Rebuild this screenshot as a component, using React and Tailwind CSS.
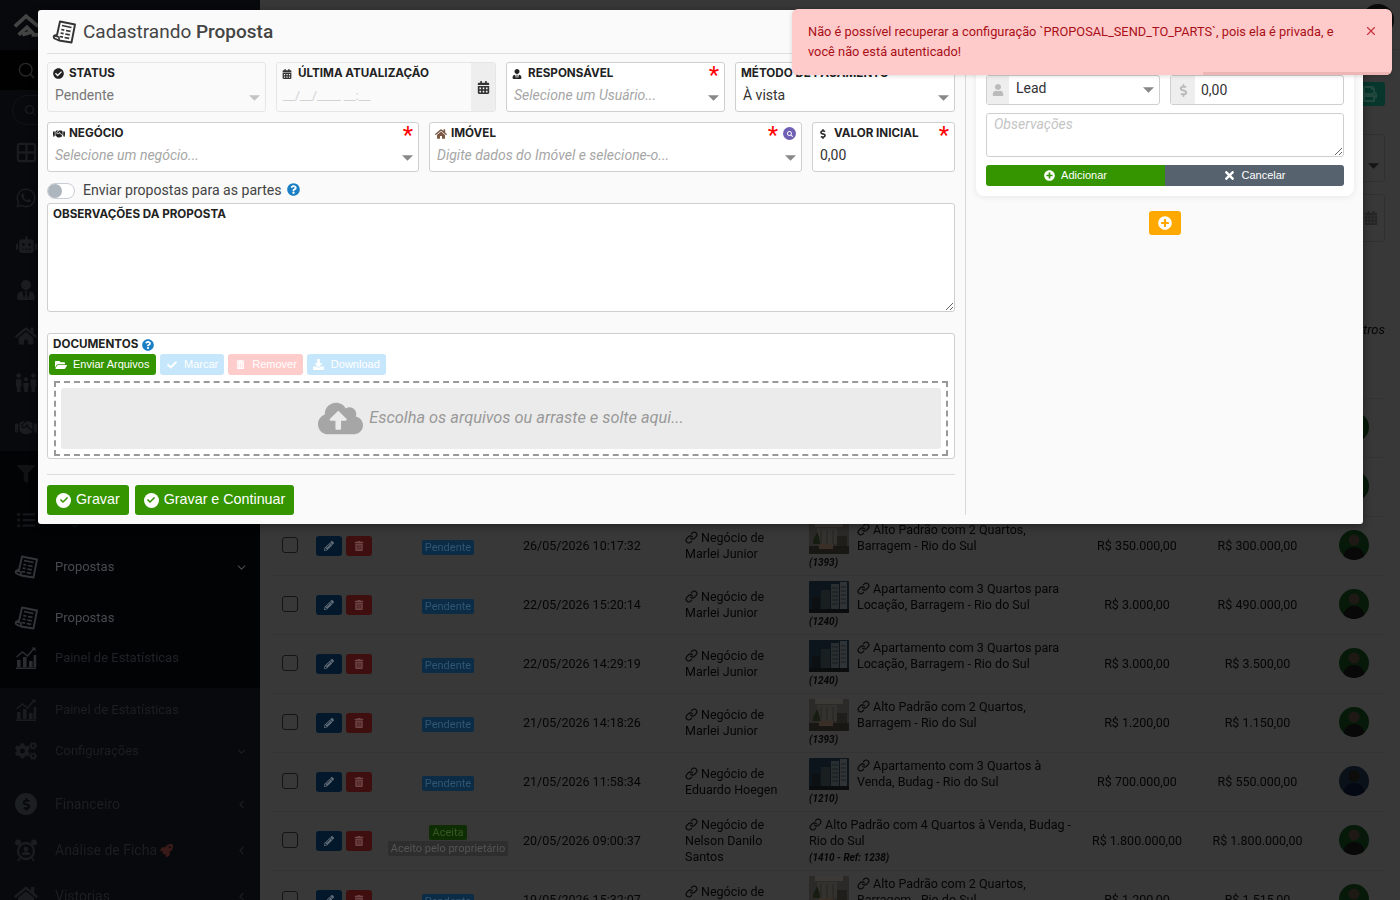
import {
  FaCalendarAlt, FaCheck, FaCheckCircle, FaCloudUploadAlt, FaCogs, FaDollarSign, FaDownload, FaFilter,
  FaFolderOpen, FaHandshake, FaHome, FaListUl, FaPencilAlt, FaPlusCircle, FaPrint, FaQuestionCircle,
  FaRobot, FaRocket, FaSearch, FaTimes, FaTrashAlt, FaUser, FaUserTie, FaWhatsapp,
} from "react-icons/fa";
import { ChevronDown, ChevronLeft, Grid2x2, Link as LinkIcon, Search, X } from "lucide-react";

const rows = [
  { date: "26/05/2026 10:17:32", name: "Marlei Junior", title: "Alto Padrão com 2 Quartos, Barragem - Rio do Sul", code: "(1393)", thumb: "room", v1: "R$ 350.000,00", v2: "R$ 300.000,00" },
  { date: "22/05/2026 15:20:14", name: "Marlei Junior", title: "Apartamento com 3 Quartos para Locação, Barragem - Rio do Sul", code: "(1240)", thumb: "tower", v1: "R$ 3.000,00", v2: "R$ 490.000,00" },
  { date: "22/05/2026 14:29:19", name: "Marlei Junior", title: "Apartamento com 3 Quartos para Locação, Barragem - Rio do Sul", code: "(1240)", thumb: "tower", v1: "R$ 3.000,00", v2: "R$ 3.500,00" },
  { date: "21/05/2026 14:18:26", name: "Marlei Junior", title: "Alto Padrão com 2 Quartos, Barragem - Rio do Sul", code: "(1393)", thumb: "room", v1: "R$ 1.200,00", v2: "R$ 1.150,00" },
  { date: "21/05/2026 11:58:34", name: "Eduardo Hoegen", title: "Apartamento com 3 Quartos à Venda, Budag - Rio do Sul", code: "(1210)", thumb: "tower", v1: "R$ 700.000,00", v2: "R$ 550.000,00", blue: true },
  { date: "20/05/2026 09:00:37", name: "Nelson Danilo Santos", title: "Alto Padrão com 4 Quartos à Venda, Budag - Rio do Sul", code: "(1410 - Ref: 1238)", v1: "R$ 1.800.000,00", v2: "R$ 1.800.000,00", accepted: true },
  { date: "19/05/2026 15:32:07", name: "Marlei Junior", title: "Alto Padrão com 2 Quartos, Barragem - Rio do Sul", code: "(1393)", thumb: "room", v1: "R$ 1.200,00", v2: "R$ 1.515,00" },
];

function PropostaIcon({ className }) {
  return (
    <svg viewBox="0 0 24 24" className={className} fill="none" stroke="currentColor">
      <path d="M8 1.5 L23 4.5 L19.5 22.5 L7 20.5 L2.5 18.5 Q1 17 2.5 15.5 L5 15 Z" strokeWidth="1.9" strokeLinejoin="round" />
      <path d="M10 5.5l9.5 2M9.3 9.5l3 .6M14 10.5l4.5 .9M8.6 13l3 .6M13.3 14l4.5 .9M8 16.5l3 .6M12.6 17.5l4.5 .9" strokeWidth="1.7" />
      <path d="M3 16 L7 17 L7 20.5" strokeWidth="1.6" />
    </svg>
  );
}

function ChartIcon() {
  return (
    <svg viewBox="0 0 24 24" className="h-[24px] w-[24px]" fill="currentColor">
      <path d="M2 23h20v-1.6H2z" />
      <path d="M3 14h3.6v7H3zM9 11h3.6v10H9zM15 15h3.6v6H15zM19.6 9h2.6v12h-2.6z" />
      <path d="M2.5 11l6-5 5 4 6-7" fill="none" stroke="currentColor" strokeWidth="1.6" />
      <path d="M17.5 1.5h4v4z" />
    </svg>
  );
}

function FamilyIcon() {
  return (
    <svg viewBox="0 0 26 24" className="h-[22px] w-[24px]" fill="currentColor">
      <circle cx="5" cy="5" r="2.6" />
      <circle cx="21" cy="5" r="2.6" />
      <circle cx="13" cy="9" r="2.2" />
      <path d="M2 9h6v8H7v6H3v-6H2zM18 9h6v8h-1v6h-4v-6h-1zM10 13h6v5h-1v5h-4v-5h-1z" />
    </svg>
  );
}

function AlarmIcon() {
  return (
    <svg viewBox="0 0 24 24" className="h-[26px] w-[24px]" fill="none" stroke="currentColor">
      <circle cx="12" cy="13" r="8" strokeWidth="2.4" />
      <circle cx="12" cy="11" r="2.4" fill="currentColor" stroke="none" />
      <path d="M7.5 17c.6-2.6 2.4-3.4 4.5-3.4s3.9.8 4.5 3.4z" fill="currentColor" stroke="none" />
      <circle cx="4" cy="4.5" r="3" fill="currentColor" stroke="none" />
      <circle cx="20" cy="4.5" r="3" fill="currentColor" stroke="none" />
      <path d="M6 20l-2 3M18 20l2 3" strokeWidth="2" />
    </svg>
  );
}

function Caret({ className = "mt-[4px] text-[#888]" }) {
  return (
    <svg viewBox="0 0 12 6" className={`h-[6px] w-[11px] shrink-0 ${className}`}>
      <polygon points="0,0 12,0 6,6" fill="currentColor" />
    </svg>
  );
}

function Thumb({ type }) {
  if (type === "tower") {
    return (
      <svg viewBox="0 0 40 32" className="h-[32px] w-[40px] shrink-0 rounded-[1px]">
        <rect width="40" height="32" fill="#0d151c" />
        <rect x="22" y="3" width="8" height="29" fill="#292e31" />
        <rect x="31" y="1" width="7" height="31" fill="#303437" />
        <rect x="12" y="9" width="9" height="23" fill="#191e21" />
        <rect x="3" y="16" width="8" height="16" fill="#0d1012" />
        <path d="M23 7h6M23 11h6M23 15h6M23 19h6M23 23h6M32 6h5M32 10h5M32 14h5M32 18h5M32 22h5" stroke="#191d20" />
        <rect y="28" width="40" height="4" fill="#0a0c0d" />
      </svg>
    );
  }
  return (
    <svg viewBox="0 0 40 32" className="h-[32px] w-[40px] shrink-0 rounded-[1px]">
      <rect width="40" height="32" fill="#2b2a28" />
      <rect x="6" width="28" height="5" fill="#3c3a37" />
      <rect x="8" y="6" width="20" height="16" fill="#33322f" />
      <path d="M12 22V8M18 22V8M24 22V8" stroke="#262523" />
      <path d="M4 22c0-6 3-8 4-12 2 4 3 8 3 12z" fill="#161d10" />
      <rect x="28" y="14" width="10" height="10" fill="#1f1e1b" />
      <rect y="24" width="40" height="8" fill="#191714" />
      <rect x="10" y="22" width="14" height="5" fill="#3a2f27" />
    </svg>
  );
}

function Avatar({ blue }) {
  return (
    <svg viewBox="0 0 30 30" className="h-[30px] w-[30px] rounded-full">
      <rect width="30" height="30" fill={blue ? "#0b1118" : "#071a0a"} />
      <circle cx="15" cy="10" r="5.5" fill={blue ? "#0e0c0a" : "#1f1915"} />
      <path d="M4 30c0-9 5-13 11-13s11 4 11 13z" fill={blue ? "#040812" : "#080808"} />
    </svg>
  );
}

const rowGrid = "grid h-[59px] grid-cols-[44px_70px_124px_175px_124px_268px_120px_121px_67px] items-center border-t border-[#333]";

// these two sit behind the modal, only the avatar sticks out on the right
function HiddenRow() {
  return (
    <div className={rowGrid}>
      <div className="col-start-9 pb-[3px] pl-[21px]">
        <Avatar />
      </div>
    </div>
  );
}

function Row({ row }) {
  return (
    <div className={`${rowGrid} text-[12.5px] leading-4 text-[#050505]`}>
      <div className="pb-[2px] pl-[10px]">
        <div className="h-4 w-4 rounded-[3px] border border-[#141414]" />
      </div>
      <div className="flex gap-1">
        <div className="flex h-5 w-[26px] items-center justify-center rounded-[3px] bg-[#04182c] text-[#5f6c78]">
          <FaPencilAlt size={10} />
        </div>
        <div className="flex h-5 w-[26px] items-center justify-center rounded-[3px] bg-[#3f0e0e] text-[#6e4444]">
          <FaTrashAlt size={10} />
        </div>
      </div>
      <div className="flex flex-col items-center pt-[2px] text-[11px] leading-[15px]">
        {row.accepted ? (
          <>
            <span className="mt-[-4px] rounded-[2px] bg-[#0f2d03] px-[3px] text-[#365a24]">Aceita</span>
            <span className="mt-[1px] rounded-[2px] bg-[#2e2e2e] px-[3px] text-[#555]">Aceito pelo proprietário</span>
          </>
        ) : (
          <span className="rounded-[2px] bg-[#0c2c46] px-[3px] text-[#305672]">Pendente</span>
        )}
      </div>
      <div className="pl-[13px]">{row.date}</div>
      <div className="pr-[12px]">
        <LinkIcon size={13} className="mr-[3px] inline align-[-2px]" />
        Negócio de
        <br />
        {row.name}
      </div>
      <div className="pr-[4px]">
        {row.thumb ? (
          <div className="flex gap-2">
            <Thumb type={row.thumb} />
            <div>
              <LinkIcon size={13} className="mr-[3px] inline align-[-2px]" />
              {row.title}
            </div>
          </div>
        ) : (
          <div>
            <LinkIcon size={13} className="mr-[3px] inline align-[-2px]" />
            {row.title}
          </div>
        )}
        <div className="mt-[1px] text-[10px] font-bold italic">{row.code}</div>
      </div>
      <div className="text-center">{row.v1}</div>
      <div className="text-center">{row.v2}</div>
      <div className="pb-[3px] pl-[21px]">
        <Avatar blue={row.blue} />
      </div>
    </div>
  );
}

function NavItem({ icon, label, height, text = "text-[#1c1f22]", iconColor = "text-[#1a1c1f]", chevron }) {
  return (
    <div className={`flex shrink-0 items-center pl-[14px] pr-[12px] ${height}`}>
      <div className={`flex w-[24px] justify-center ${iconColor}`}>{icon}</div>
      <div className={`ml-[17px] flex-1 text-[13px] ${text}`}>{label}</div>
      {chevron === "down" && <ChevronDown size={13} className={text} />}
      {chevron === "left" && <ChevronLeft size={13} className={text} />}
    </div>
  );
}

function Sidebar() {
  return (
    <aside className="flex h-[900px] w-[260px] shrink-0 flex-col overflow-hidden bg-[#07090c] font-['Roboto',sans-serif]">
      <div className="flex h-[50px] shrink-0 items-center pl-[13px]">
        <svg viewBox="0 0 30 26" className="h-[25px] w-[28px] text-[#444]" fill="none" stroke="currentColor" strokeWidth="4">
          <path d="M2 14 L14 3 L27 14 M6 23 L15 15 L20 20 L10 23 M20 23h10" />
        </svg>
      </div>
      <div className="flex h-[40px] shrink-0 items-center bg-[#010101] pl-[17px] text-[#26282a]">
        <Search size={19} strokeWidth={1.8} />
      </div>
      <div className="flex h-[39px] shrink-0 items-center pl-[12px]">
        <div className="flex h-[30px] w-[236px] items-center rounded-full border border-[#111417] pl-[11px] text-[#202225]">
          <Search size={12} />
        </div>
      </div>
      <NavItem height="h-[46px]" icon={<Grid2x2 size={23} strokeWidth={2.4} />} />
      <NavItem height="h-[46px]" icon={<FaWhatsapp size={22} />} />
      <NavItem height="h-[46px]" icon={<FaRobot size={21} />} />
      <NavItem height="h-[46px]" icon={<FaUserTie size={20} />} />
      <NavItem height="h-[46px]" icon={<FaHome size={22} />} />
      <NavItem height="h-[46px]" icon={<FamilyIcon />} />
      <NavItem height="h-[46px]" icon={<FaHandshake size={22} />} />
      <div className="flex h-[237px] shrink-0 flex-col bg-[#020304]">
        <NavItem height="h-[46px]" icon={<FaFilter size={18} />} iconColor="text-[#111214]" />
        <NavItem height="h-[46px]" icon={<FaListUl size={18} />} iconColor="text-[#141618]" label="Negócios em Lista" text="text-[#101214]" />
        <NavItem height="h-[48px]" icon={<PropostaIcon className="h-[26px] w-[24px]" />} iconColor="text-[#333639]" label="Propostas" text="text-[#484b4f]" chevron="down" />
        <div className="mt-[2px]">
          <NavItem height="h-[50px]" icon={<PropostaIcon className="h-[26px] w-[24px]" />} iconColor="text-[#333639]" label="Propostas" text="text-[#484b4f]" />
        </div>
        <NavItem height="h-[30px]" icon={<ChartIcon />} iconColor="text-[#2b2e31]" label="Painel de Estatísticas" text="text-[#202326]" />
      </div>
      <NavItem height="h-[44px]" icon={<ChartIcon />} label="Painel de Estatísticas" />
      <NavItem height="h-[38px]" icon={<FaCogs size={22} />} label="Configurações" chevron="down" />
      <div className="mt-[12px]">
        <NavItem
          height="h-[44px]"
          icon={
            <span className="flex h-[22px] w-[22px] items-center justify-center rounded-full bg-[#1c1f22] text-[#07090c]">
              <FaDollarSign size={13} />
            </span>
          }
          label={<span className="text-[14px]">Financeiro</span>}
          chevron="left"
        />
      </div>
      <NavItem
        height="h-[48px]"
        icon={<AlarmIcon />}
        label={
          <span className="text-[14px]">
            Análise de Ficha <FaRocket size={13} className="inline text-[#3a1a18]" />
          </span>
        }
        chevron="left"
      />
      <NavItem height="h-[44px]" icon={<FaHome size={24} />} label={<span className="text-[14px]">Vistorias</span>} chevron="left" />
    </aside>
  );
}

function Background() {
  return (
    <div className="flex blur-[0.5px]">
      <Sidebar />
      <main className="flex h-[900px] flex-1 flex-col overflow-hidden bg-[#383838] font-['Roboto',sans-serif]">
        <div className="flex h-[50px] shrink-0 items-start justify-end border-b border-[#333] pr-[6px] pt-[4px]">
          <div className="h-[32px] w-[32px] rounded-full bg-[#0a0a0a]" />
        </div>
        <div className="flex h-[348px] shrink-0 flex-col items-end pr-[15px]">
          <div className="mt-[32px] flex h-[24px] w-[40px] items-center justify-end rounded-[3px] bg-[#07362d] pr-[8px] text-[#23493f]">
            <FaPrint size={16} />
          </div>
          <div className="mt-[28px] flex h-[48px] w-[200px] items-end justify-end rounded-[3px] border border-[#303030] pb-[12px] pr-[5px]">
            <Caret className="text-[#141414]" />
          </div>
          <div className="mt-[12px] flex h-[48px] w-[200px] items-center justify-end rounded-[3px] border border-[#303030] pr-[6px] text-[#262626]">
            <FaCalendarAlt size={14} />
          </div>
          <div className="mt-[80px] text-[13px] italic leading-4 text-[#050505]">Filtros</div>
        </div>
        <div className="ml-[12px] mr-[15px]">
          <HiddenRow />
          <HiddenRow />
          {rows.map((row) => (
            <Row key={row.date} row={row} />
          ))}
        </div>
      </main>
    </div>
  );
}

const labelFont = "font-['Inter',sans-serif] text-[11.65px] font-bold leading-[15px] text-[#222]";

function Field({ icon, label, required, extra, disabled, children }) {
  return (
    <div className={`flex h-[50px] flex-col rounded-[3px] border px-[5px] pt-[3px] ${disabled ? "border-[#e6e6e6] bg-[#fafafa]" : "border-[#cfcfcf] bg-white"}`}>
      <div className="flex h-[15px] items-center">
        {icon && <span className="flex w-[16px] shrink-0 text-[#222]">{icon}</span>}
        <span className={labelFont}>{label}</span>
        <span className="ml-auto flex items-center gap-[5px]">
          {required && <span className="h-[15px] text-[24px] leading-[18px] text-[#f00]">*</span>}
          {extra}
        </span>
      </div>
      <div className="-mt-[1px] flex flex-1 items-center pl-[2px]">{children}</div>
    </div>
  );
}

function Placeholder({ children }) {
  return (
    <>
      <span className="flex-1 text-[14px] italic text-[#a6a6a6]">{children}</span>
      <Caret />
    </>
  );
}

function SmallButton({ icon, label, className }) {
  return (
    <div className={`flex h-[21px] items-center rounded-[3px] px-[6px] font-['Liberation_Sans',sans-serif] text-[11px] text-white ${className}`}>
      <span className="mr-[6px] flex w-[12px] justify-center">{icon}</span>
      {label}
    </div>
  );
}

function SaveButton({ label }) {
  return (
    <div className="flex h-[30px] items-center rounded-[3px] bg-[#359500] pl-[9px] pr-[9px] font-['Liberation_Sans',sans-serif] text-[14.3px] text-white">
      <span className="mr-[5px] flex h-[15px] w-[15px] items-center justify-center rounded-full bg-white text-[#359500]">
        <FaCheck size={8} />
      </span>
      {label}
    </div>
  );
}

function LeftPane() {
  return (
    <section className="mb-[9px] w-[928px] shrink-0 border-r border-[#d9d9d9] pl-[9px] pr-[10px]">
      <div className="-mr-[10px] flex h-[44px] items-center border-b border-[#e0e0e0] pl-[5px] pt-[1px] text-[19px] text-[#444]">
        <PropostaIcon className="mr-[7px] h-[24px] w-[24px] text-[#333]" />
        <span>
          Cadastrando <span className="font-medium">Proposta</span>
        </span>
      </div>

      <div className="mt-[8px] grid grid-cols-[219px_220px_219px_220px] gap-[10px]">
        <Field disabled icon={<FaCheckCircle size={11} />} label="STATUS">
          <span className="flex-1 text-[14px] text-[#777]">Pendente</span>
          <Caret className="mt-[4px] text-[#c4c4c4]" />
        </Field>
        <div className="flex h-[50px] rounded-[3px] border border-[#e6e6e6] bg-[#fafafa]">
          <div className="flex flex-1 flex-col pl-[5px] pt-[3px]">
            <div className="flex h-[15px] items-center">
              <FaCalendarAlt size={10} className="mr-[6px] text-[#333]" />
              <span className={labelFont}>ÚLTIMA ATUALIZAÇÃO</span>
            </div>
            <div className="flex flex-1 items-center pl-[1px] text-[13px] text-[#d2d2d2]">__/__/____ __:__</div>
          </div>
          <div className="flex w-[24px] items-center justify-center rounded-r-[3px] bg-[#eeeeee] text-[#333]">
            <FaCalendarAlt size={13} />
          </div>
        </div>
        <Field icon={<FaUserTie size={10} />} label="RESPONSÁVEL" required>
          <Placeholder>Selecione um Usuário...</Placeholder>
        </Field>
        <Field label="MÉTODO DE PAGAMENTO">
          <span className="flex-1 text-[14px] text-[#333]">À vista</span>
          <Caret />
        </Field>
      </div>

      <div className="mt-[10px] grid grid-cols-[372px_373px_143px] gap-[10px]">
        <Field icon={<FaHandshake size={12} />} label="NEGÓCIO" required>
          <Placeholder>Selecione um negócio...</Placeholder>
        </Field>
        <Field
          icon={<FaHome size={12} className="text-[#7a5a45]" />}
          label="IMÓVEL"
          required
          extra={
            <span className="flex h-[13px] w-[13px] items-center justify-center rounded-full bg-[#6f5fb5] text-white">
              <FaSearch size={6} />
            </span>
          }
        >
          <Placeholder>Digite dados do Imóvel e selecione-o...</Placeholder>
        </Field>
        <Field icon={<FaDollarSign size={10} />} label="VALOR INICIAL" required>
          <span className="text-[14px] text-[#333]">0,00</span>
        </Field>
      </div>

      <div className="flex h-[31px] items-center pt-[7px] text-[14.1px] text-[#444]">
        <div className="mr-[8px] flex h-[16px] w-[28px] items-center rounded-full border border-[#c9ced6] bg-white">
          <div className="h-[14px] w-[14px] rounded-full bg-[#adb5bd]" />
        </div>
        Enviar propostas para as partes
        <FaQuestionCircle size={13} className="mb-[3px] ml-[5px] text-[#1a7fc4]" />
      </div>

      <div className="flex h-[109px] flex-col rounded-[3px] border border-[#cfcfcf] bg-white pl-[5px] pt-[3px]">
        <span className={labelFont}>OBSERVAÇÕES DA PROPOSTA</span>
        <textarea className="w-full flex-1 resize-y bg-transparent outline-none" />
      </div>

      <div className="mt-[21px] h-[126px] rounded-[3px] border border-[#cfcfcf] bg-white px-[1px] pt-[3px]">
        <div className="flex h-[15px] items-center pl-[4px]">
          <span className={labelFont}>DOCUMENTOS</span>
          <FaQuestionCircle size={12} className="ml-[4px] text-[#1a7fc4]" />
        </div>
        <div className="mt-[2px] flex gap-[4px]">
          <SmallButton className="w-[107px] bg-[#359500]" icon={<FaFolderOpen size={12} />} label="Enviar Arquivos" />
          <SmallButton className="bg-[#c6e6fb]" icon={<FaCheck size={10} />} label="Marcar" />
          <SmallButton className="bg-[#ffcccc]" icon={<FaTrashAlt size={9} />} label="Remover" />
          <SmallButton className="bg-[#c6e6fb]" icon={<FaDownload size={11} />} label="Download" />
        </div>
        <div className="mx-[5px] mt-[6px] h-[75px] border-2 border-dashed border-[#999] p-[5px]">
          <div className="flex h-[61px] items-center justify-center rounded-[3px] bg-[#ebebeb] pb-[1px] text-[16.35px] italic text-[#999]">
            <FaCloudUploadAlt size={45} className="mr-[6px] text-[#a6a6a6]" />
            Escolha os arquivos ou arraste e solte aqui...
          </div>
        </div>
      </div>

      <div className="mt-[15px] border-t border-[#dcdcdc] pt-[10px]">
        <div className="flex gap-[6px]">
          <SaveButton label="Gravar" />
          <SaveButton label="Gravar e Continuar" />
        </div>
      </div>
    </section>
  );
}

function RightPane() {
  return (
    <section className="flex-1 pl-[10px]">
      <div className="mt-[10px] w-[378px] rounded-[8px] bg-white px-[10px] pb-[10px] pt-[55px] shadow-[0_1px_6px_rgba(0,0,0,0.08)]">
        <div className="grid grid-cols-2 gap-[10px]">
          <div className="flex h-[30px] items-center rounded-[3px] border border-[#cfcfcf] bg-white">
            <span className="flex h-full w-[22px] items-center justify-center bg-[#eee] text-[#bbb]">
              <FaUser size={12} />
            </span>
            <span className="mb-[3px] ml-[7px] flex-1 text-[14px] text-[#333]">Lead</span>
            <Caret className="mr-[5px] text-[#888]" />
          </div>
          <div className="flex h-[30px] items-center rounded-[3px] border border-[#cfcfcf] bg-white">
            <span className="flex h-full w-[24px] items-center justify-center bg-[#eee] text-[#bbb]">
              <FaDollarSign size={13} />
            </span>
            <span className="ml-[6px] text-[14px] text-[#333]">0,00</span>
          </div>
        </div>
        <textarea
          placeholder="Observações"
          className="mt-[8px] block h-[44px] w-full resize-y rounded-[3px] border border-[#cfcfcf] px-[7px] py-0 text-[14px] italic outline-none placeholder:text-[#c4c4c4]"
        />
        <div className="mt-[8px] flex h-[21px] overflow-hidden rounded-[3px] font-['Liberation_Sans',sans-serif] text-[11px] text-white">
          <div className="flex flex-1 items-center justify-center gap-[6px] bg-[#359500]">
            <FaPlusCircle size={11} /> Adicionar
          </div>
          <div className="flex flex-1 items-center justify-center gap-[5px] bg-[#56636e]">
            <FaTimes size={13} /> Cancelar
          </div>
        </div>
      </div>
      <div className="ml-[173px] mt-[15px] flex h-[24px] w-[32px] items-center justify-center rounded-[3px] bg-[#ffa800] text-white">
        <FaPlusCircle size={14} />
      </div>
    </section>
  );
}

export default function App() {
  return (
    <div className="relative h-[900px] w-[1400px] overflow-hidden font-['Roboto',sans-serif]">
      <Background />

      <div className="absolute left-[38px] top-[10px] flex h-[514px] w-[1325px] rounded-[3px] bg-[#fafafa] shadow-[0_2px_8px_rgba(0,0,0,0.4)]">
        <LeftPane />
        <RightPane />
      </div>

      <div className="absolute left-[792px] top-[9px] flex h-[66px] w-[600px] overflow-hidden rounded-[6px] bg-[#ffcaca] pl-[16px] pr-[14px] pt-[13px] text-[12.8px] leading-[20px] text-[#a90f17] shadow-[0_1px_4px_rgba(0,0,0,0.15)]">
        <p className="w-[540px]">
          Não é possível recuperar a configuração `PROPOSAL_SEND_TO_PARTS`, pois ela é privada, e você não está autenticado!
        </p>
        <X size={14} className="ml-auto mt-[2px] text-[#c9353c]" />
        <div className="absolute bottom-0 right-0 h-[3px] w-[189px] bg-[#eeb5b5]" />
      </div>
    </div>
  );
}
